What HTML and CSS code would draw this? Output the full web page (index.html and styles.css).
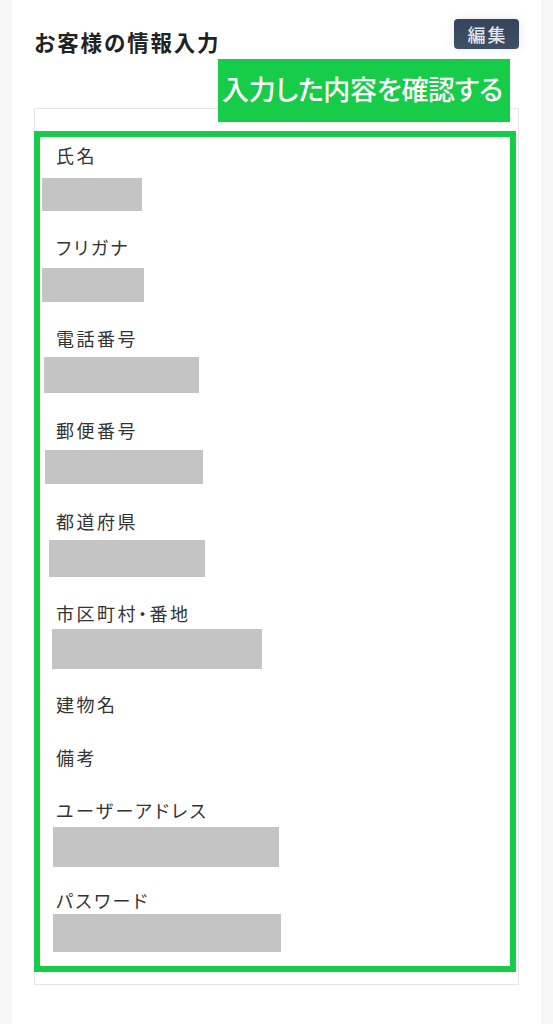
FILE: index.html
```html
<!DOCTYPE html>
<html lang="ja">
<head>
<meta charset="utf-8">
<title>お客様の情報入力</title>
<link rel="stylesheet" href="styles.css">
</head>
<body>
<div class="panel">
  <header class="head">
    <h2 class="title">お客様の情報入力</h2>
    <button class="edit" type="button">編集</button>
  </header>
  <div class="callout">入力した内容を確認する</div>
  <section class="card">
    <div class="highlight">
      <div class="field" style="--mb:23px">
        <div class="label">氏名</div>
        <div class="redact" style="--x:2px;--w:100px;--h:33px;--t:10px"></div>
      </div>
      <div class="field" style="--mb:23px">
        <div class="label">フリガナ</div>
        <div class="redact" style="--x:2px;--w:102px;--h:34px;--t:8px"></div>
      </div>
      <div class="field" style="--mb:24px">
        <div class="label">電話番号</div>
        <div class="redact" style="--x:4px;--w:155px;--h:36px;--t:6px"></div>
      </div>
      <div class="field" style="--mb:24px">
        <div class="label">郵便番号</div>
        <div class="redact" style="--x:5px;--w:158px;--h:34px;--t:7px"></div>
      </div>
      <div class="field" style="--mb:23px">
        <div class="label">都道府県</div>
        <div class="redact" style="--x:9px;--w:156px;--h:37px;--t:6px"></div>
      </div>
      <div class="field" style="--mb:22px">
        <div class="label">市区町村・番地</div>
        <div class="redact" style="--x:12px;--w:210px;--h:40px;--t:3px"></div>
      </div>
      <div class="field" style="--mb:27px">
        <div class="label">建物名</div>
      </div>
      <div class="field" style="--mb:27px">
        <div class="label">備考</div>
      </div>
      <div class="field" style="--mb:20px">
        <div class="label">ユーザーアドレス</div>
        <div class="redact" style="--x:13px;--w:226px;--h:40px;--t:4px"></div>
      </div>
      <div class="field" style="--mb:14px">
        <div class="label">パスワード</div>
        <div class="redact" style="--x:13px;--w:228px;--h:38px;--t:1px"></div>
      </div>
    </div>
  </section>
</div>
</body>
</html>
```

FILE: styles.css
```css
* {
  box-sizing: border-box;
}

html, body {
  margin: 0;
  padding: 0;
}

body {
  background: #f6f6f6;
  font-family: "Noto Sans CJK JP", "Noto Sans", sans-serif;
  color: #333;
}

.panel {
  position: relative;
  margin: 0 12px;
  background: #fff;
  min-height: 1024px;
  padding: 19px 22px 0;
}

.head {
  display: flex;
  justify-content: space-between;
  align-items: flex-start;
}

.title {
  margin: 9px 0 0;
  font-size: 21.5px;
  line-height: 28px;
  font-weight: 700;
  letter-spacing: 1.8px;
  color: #222;
}

.edit {
  width: 65px;
  height: 30px;
  margin: 0;
  padding: 0 0 0 2px;
  border: none;
  border-radius: 4px;
  background: linear-gradient(180deg, #34445a 0%, #3f4f64 100%);
  color: #e2e5ea;
  font-family: "Noto Sans CJK JP", sans-serif;
  font-size: 18px;
  font-weight: 500;
  letter-spacing: 2px;
  line-height: 30px;
  box-shadow: 0 0 10px rgba(40, 50, 70, 0.12);
}

.callout {
  position: absolute;
  top: 59px;
  right: 31px;
  width: 292px;
  height: 63px;
  background: #16cc48;
  color: #fff;
  font-size: 27px;
  font-weight: 500;
  font-feature-settings: "palt";
  letter-spacing: -0.3px;
  line-height: 60px;
  padding-left: 4px;
  white-space: nowrap;
  z-index: 2;
}

.card {
  margin-top: 52px;
  border: 1px solid #e6e6e6;
  padding: 22px 0 12px;
}

.highlight {
  margin: 0 2px 0 -1px;
  border: 6px solid #16cc48;
  padding: 5px 0 0;
}

.field {
  margin-bottom: var(--mb, 23px);
}

.label {
  padding-left: 16px;
  font-size: 18px;
  line-height: 26px;
  font-feature-settings: "palt";
  letter-spacing: 2.5px;
  color: #333;
}

.redact {
  margin-top: var(--t);
  margin-left: var(--x);
  width: var(--w);
  height: var(--h);
  background: #c4c4c4;
}
```
